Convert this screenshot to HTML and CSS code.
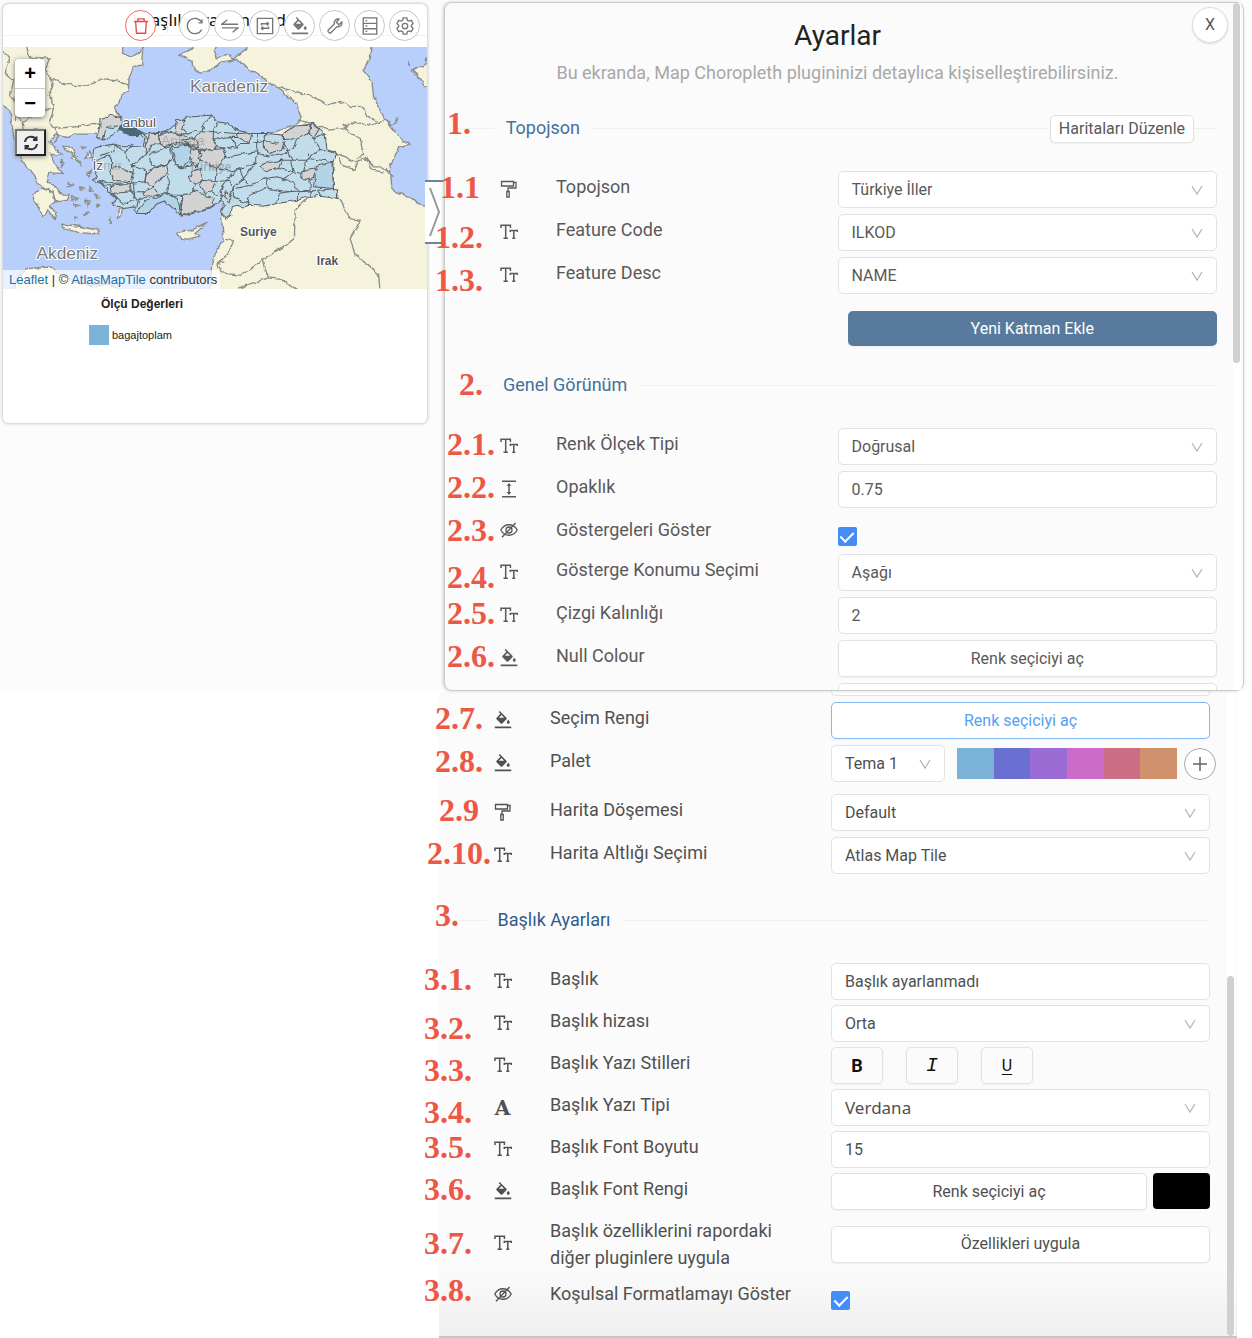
FILE: index.html
```html
<!DOCTYPE html>
<html lang="tr">
<head>
<meta charset="utf-8">
<meta name="viewport" content="width=device-width, initial-scale=1">
<title>Map Choropleth – Ayarlar</title>
<link rel="stylesheet" href="styles.css">
</head>
<body>
<svg class="sprite" aria-hidden="true">
  <defs>
    <symbol id="tt" viewBox="0 0 18 16"><path d="M1 4V1.200h9.400V4M5.700 1v13.300M3.500 14.300h4.400M10.300 8V6.400h7V8M13.800 6.400v8M12.300 14.300h3" fill="none" stroke="currentColor" stroke-width="1.500"/></symbol>
    <symbol id="roller" viewBox="0 0 18 18"><path d="M1.500 1.500h12v4.500h-12zM13.500 2.500h2.500v5.500H8v3.500M6.800 11.500h2.400v5.500H6.800z" fill="none" stroke="currentColor" stroke-width="1.300"/></symbol>
    <symbol id="height" viewBox="0 0 18 18"><path d="M2 1.300h14M2 16.700h14M9 4v10" fill="none" stroke="currentColor" stroke-width="1.500"/><path d="M9 3l2.300 3H6.700zM9 15l2.300-3H6.700z" fill="currentColor"/></symbol>
    <symbol id="eye" viewBox="0 0 18 16"><g fill="none" stroke="currentColor" stroke-width="1.300"><path d="M.8 8C4.500 1 13.500 1 17.200 8C13.500 15 4.500 15 .8 8z"/><circle cx="9" cy="8" r="3"/><path d="M15.600 1L2 15.300"/></g></symbol>
    <symbol id="bucket" viewBox="0 0 24 24"><path fill="currentColor" d="M16.560 8.940L7.620 0 6.210 1.410l2.380 2.380-5.150 5.150c-.59.59-.59 1.540 0 2.120l5.500 5.500c.29.29.68.44 1.060.44s.77-.15 1.060-.44l5.500-5.500c.59-.58.59-1.530 0-2.120zM6.500 9L10 5.210 13.500 9H6.500zM19 11.500s-2 2.170-2 3.500c0 1.100.9 2 2 2s2-.9 2-2c0-1.330-2-3.500-2-3.500zM1 20.500h22v2.500H1z"/></symbol>
    <symbol id="chev" viewBox="0 0 12 12"><path d="M1 1.500l5 8 5-8" fill="none" stroke="currentColor" stroke-width="1.200"/></symbol>
  </defs>
</svg>
<main class="page">
  <div class="preview">
    <section class="card">
      <header class="card-head">
        <h2 class="card-title">Başlık ayarlanmadı</h2>
        <div class="toolbar">
          <button class="tool danger" aria-label="Sil"><svg viewBox="0 0 20 20"><path d="M2 5h16M6.500 5V2h7v3M4 5l1 13h10l1-13" /></svg></button>
          <span class="tool-sep"></span>
          <button class="tool" aria-label="Yenile"><svg viewBox="0 0 20 20"><path d="M17.500 6A8.500 8.500 0 1 0 17.500 14M17.800 2.500V6.500H13.800"/></svg></button>
          <button class="tool" aria-label="Değiştir"><svg viewBox="0 0 20 20"><path d="M19 8H1l6-5M1 12h18l-6 5"/></svg></button>
          <button class="tool" aria-label="Döngü"><svg viewBox="0 0 20 20"><path d="M1.500 1.500h17v17h-17zM6 9.500V7.500h8M12 5.500l2 2-2 2M14 10.500v2H6M8 10.500l-2 2 2 2"/></svg></button>
          <button class="tool" aria-label="Boya"><svg><use href="#bucket"/></svg></button>
          <button class="tool" aria-label="Araçlar"><svg viewBox="0 0 20 20"><path d="M17.600 5.500l-3.400 3.100-2.700-2.700 3.100-3.500C11.500 1.500 8.500 4 9.300 7.800L2.300 14.800c-1 1 1.900 3.900 2.900 2.900l7-7c3.800.8 6.300-2.200 5.400-5.200z"/></svg></button>
          <button class="tool" aria-label="Veri"><svg viewBox="0 0 20 20"><path d="M2.500 1h15v18h-15zM2.500 7h15M2.500 13h15M5 4h2M5 10h2M5 16h2"/></svg></button>
          <button class="tool" aria-label="Ayarlar"><svg viewBox="0 0 20 20"><circle cx="10" cy="10" r="3"/><path d="M8 1h4l.6 2.600 1.800 1 2.600-.8 2 3.600-1.900 1.900v1.400l1.900 1.900-2 3.600-2.600-.8-1.800 1L12 19H8l-.6-2.600-1.800-1-2.600.8-2-3.600 1.900-1.900V9.300L1 7.400l2-3.600 2.600.8 1.800-1z"/></svg></button>
        </div>
      </header>
      <div class="map">
        <svg class="map-art" viewBox="9 141 1272 725" preserveAspectRatio="xMidYMid slice" role="img" aria-label="Türkiye haritası">
          <defs><filter id="rough" x="-5%" y="-5%" width="110%" height="110%"><feTurbulence type="fractalNoise" baseFrequency="0.05" numOctaves="2" seed="4"/><feDisplacementMap in="SourceGraphic" scale="14" xChannelSelector="R" yChannelSelector="G"/></filter></defs>
          <g class="land" filter="url(#rough)">
            <path d="M-20 100H370L368 160 395 172 420 158 432 141 428 195 400 200 388 235 385 270 362 285 358 310 345 322 362 350 330 365 290 402 225 402 205 412 165 405 150 425 187 465 150 462 165 490 190 520 150 518 142 545 165 555 180 580 208 585 203 600 170 605 150 590 130 560 112 545 100 520 70 490 60 455 45 430 40 395 30 330 0 310z"/>
            <path d="M98 585l30-22 32 12 6 30-16 12 18 22-4 18-18-25-16 18-10-25-16-20z"/>
            <path d="M538 165l42-24v-30h90l-28 40 10 22 35-8 15 15-40 6-20 18-40 15-20-10-3-25z"/>
            <path d="M745 120l-5 25-40 32 18 8 27 20 45 30 45 30 55 45 13 45-18 20-180 60-40 200 0 20 5 65-20 30-15 40-5 96h660V625l-30-15-30-20-30-10-25-15-5-65 15-35 10-25 35-8-35-22-45-60-30-60-5-45-27-35 22-35 10-65z"/>
            <path d="M1300 160l-22 15 3 15-46 22 25 22 10 25 30 5z"/>
            <path d="M1225 185l6 12-4-14z"/>
            <path d="M40 890l10-55 30-30 70-5 25 20 65 30 50 8 40-10 20 20 80 0 45 14 60-12 60 10 40 20z"/>
            <path d="M530 696l45-6 48-24-38 34 15 10-30 8-35-6zM188 672l50 6 60 12-5 12-50-5-55-12zM355 632l14-12-4 20-12 14zM328 660l4 14-2-18z"/>
            <path d="M190 435l30 12 10 20-35-18zM215 470l30 25-20-30zM245 440l15 2-12 4zM255 475l12-22 6 14zM185 480l8 10-6 10zM205 550l12 6-10 4zM240 560l12 8-10 2zM215 590l16 4-14 6zM255 600l14 2-12 6zM270 560l10 10-8 4zM262 520l10-10-4 18zM285 580l16 12-14 2zM225 612l12 4-10 4zM290 615l8 2-6 4zM265 620l8-14-10 4zM225 650l8 4-6 4zM252 640l12-2-8 8z"/>
            <path class="line" d="M9 150l20 30-12 40 25 20-10 45 20 30-8 45M80 141l8 28 20 5 40 0-10 35 22 45-15 30 20 30-15 50 25 45-12 20M145 235l55 18 50 5 60-22 60 10 18 12M45 345l30 20 45-35 35-5M70 365l5 40 40-20M165 385l60-5 55-10 30 5"/>
            <path class="line" d="M835 262l60 15 50 15 40 22 35-10 35 15 30 0 15 30 30 15M895 360l40 10 50 20 45-5 30-20 50 10 50-15 15 15 20-20M1030 370l20 30 30 15 10 50-20 10M1010 460l55 25 30-10 25 25 25 0 35 30M1010 460l15 35 40 15 10-25M1095 470l20 40 35 5"/>
            <path class="line" d="M1015 585l15 35 20 35 30 5-10 20-20 35 15 50 35 25 35 30 5 60M925 590l-40 40-2 85-95 65-65 45-60-8-10-30 30-25 18-40-25-5M785 775l20 58 45 5 60 45M805 833l-90 30M650 790l20-5"/>
          </g>
          <g class="place"><text class="sea-name" x="570" y="276">Karadeniz</text><text class="sea-name" x="110" y="776">Akdeniz</text></g>
          <g filter="url(#rough)" class="turkey">
            <path class="p" d="M362 372L322 380 315 395 312 420 345 400 370 385zM298 440l42-8 30 8 60-2 5-22-15-15 30 0 45-8 30-18 30-23 50-4 30-3 15 20 35 5 30 22 40 8 45 0 50 5 35-25 55-10 35 30 5 45 30 15-12 25 2 80 12 5 0 25-20-5-30-5-40 5-30 10-60 10-40 8-45-3-15 5-25-5-10 5-5 25-15 12-13-27 12-15-14-15-25 20-40 15-55 12-10-22-5-15-35-10-25 10-20 30-35 0-10-20-30 5-35-15 15-15-25-20-20-25-30-10 15-10-10-20 20-20-25-10 5-35z"/>
            <path class="p strong" d="M515 440l55-5 12 15-10 25 5 20-30 8-20-8-5-30zM412 640l20-38 40-12 30-12 30 14 12 54-50-44-25 10-20 28zM295 540l50 12 40-2-20 10-45-4zM945 500l50-15 5 80-60-5 5-25z"/>
            <path class="p dark" d="M360 372l35 8 38 16-18 14-30-7-25-12z"/>
            <g class="gray">
              <path d="M300 355l35-10 27 7 3 20-25 10-18-2-7 15-5 23-20-3 10-35z"/>
              <path d="M448 400l27 0 3 30-23 5-15 27-5-22 10-15zM480 405l25-10 40 10 45 15 0 15-60-5-35 10-17-10zM530 362l25-4-10 27 15 15-15 5-20-10zM605 392l35 3 0 25 10 20-15 10-45-5-45-25 40-5zM600 452l70-7 10 25-30 35-30-15-25-15zM575 450l20-10 10 30-15 30-20-25zM575 515l25-10 10 35-25 15-17-20zM610 540l35 5-10 30-20 5-15-20zM550 585l40-15 30 20 20 5 0 20-35 15-60 15-5-25zM465 500l35-5 5 20-45 45-25-15 5-25zM335 505l25-5 40 20-5 25-55-5-10-25zM330 560l60-10 5 25-60 5zM430 575l30-13 15 23-40 7zM712 400l43-2-5 32-35-18zM790 420l30 10 35-5-5 20-40 15-20-15zM850 400l35-22 45-3-5 25-35 15-40 3zM935 370l23 15-18 30-15-10zM790 490l55-10-10 25-40 7-15-12zM905 515l45-10-15 35-30-5zM675 575l20 15-5 15-15-15z"/>
            </g>
            <path class="b" d="M430 398l15 20-10 22M495 393l-15 12M495 393l30 2M555 352l0 6M635 345l-20 25-10 22M560 400l20-8 25 0M650 365l-10 30 70 5M640 420l40-10 35 2M650 440l30 5 45-15 25 0M690 408l20 35-25 5M680 470l90-15 0-55M770 455l0 30-50 20-15 15-25 10M800 400l-10 20M760 430l30-10M850 405l0 13M855 425l5 35-45 8-45-8M890 415l-10 30-25 10M940 415l20 30-40 35-40 0-20-30M975 400l-35 15M960 445l50 15M925 460l0 15 75 10M920 480l-10 30M880 480l-40 0M835 505l45 10 25 5M770 485l-40 50 20 20 50-20 30-5M870 480l10 35-35 25M720 505l10 30-30 25-10 30M750 555l-45 10M800 535l5 30 60 10 65-5 0-35M830 530l50 15 15 30 60-5 50-5M865 575l-30 5-5 28M895 575l0 25M935 570l-5 18M955 570l5 15M750 615l-10-25 60-30M700 560l0 35 50 15M650 505l-5 40M650 505l50 10 20-10M645 545l45-5 5 20M635 575l30 15 10 0M665 600l-5-30 35-50M570 475l-20 28-25-8-15-55-60 20 5 35 40 5M505 515l0 50-5 20 50 0M500 495l15-20M440 462l-45 35-20-40-30-25M395 497l45 15-5 33M345 432l0 20-45 15M375 457l25-25M290 480l35-12 10 10 0 27M400 520l-5-23M435 545l-45 5M395 575l20 25-5 25M430 575l-40 0M340 580l30 30 40-10M415 600l20-10M475 585l25-10M550 585l-10 60M585 555l-10 20M400 545l5 50"/>
          </g>
          <g class="place"><text class="town" x="368" y="382">anbul</text><text class="town faint" x="484" y="436">Ankara</text><text class="town" x="278" y="510">İz</text><text class="town faint" x="310" y="510">mir</text><text class="town bold faint" x="566" y="512">Türkiye</text><text class="town bold" x="720" y="706">Suriye</text><text class="town bold" x="950" y="795">Irak</text></g>
        </svg>
        <div class="zoom"><button aria-label="Yakınlaştır">+</button><button aria-label="Uzaklaştır">−</button></div>
        <button class="reset" aria-label="Haritayı sıfırla"><svg viewBox="0 0 16 16"><path d="M2 7a6 6 0 0 1 11-2.500M13.500 1.500v3.500h-3.500M14 9A6 6 0 0 1 3 11.500M2.500 14.500V11H6"/></svg></button>
        <p class="credit"><a href="#">Leaflet</a> | © <a href="#">AtlasMapTile</a> contributors</p>
      </div>
      <div class="legend">
        <h3>Ölçü Değerleri</h3>
        <p><span class="key"></span>bagajtoplam</p>
      </div>
    </section>
    <button class="handle" aria-label="Paneli aç"><svg viewBox="0 0 14 52"><path d="M2 2l9 24-9 24"/></svg></button>
  </div>

  <div class="settings">
    <section class="panel first">
      <span class="thumb"></span>
      <button class="close" aria-label="Kapat">X</button>
      <h1>Ayarlar</h1>
      <p class="lead">Bu ekranda, Map Choropleth plugininizi detaylıca kişiselleştirebilirsiniz.</p>

      <div class="divider"><b class="num n-a up">1.</b><h2>Topojson</h2><button class="btn small">Haritaları Düzenle</button></div>
      <div class="row"><b class="num n-c">1.1</b><svg class="ico"><use href="#roller"/></svg><label for="f11">Topojson</label><div class="ctl sel"><select id="f11"><option>Türkiye İller</option></select><svg><use href="#chev"/></svg></div></div>
      <div class="row"><b class="num n-d low">1.2.</b><svg class="ico"><use href="#tt"/></svg><label for="f12">Feature Code</label><div class="ctl sel"><select id="f12"><option>ILKOD</option></select><svg><use href="#chev"/></svg></div></div>
      <div class="row"><b class="num n-d low">1.3.</b><svg class="ico"><use href="#tt"/></svg><label for="f13">Feature Desc</label><div class="ctl sel"><select id="f13"><option>NAME</option></select><svg><use href="#chev"/></svg></div></div>
      <div class="add"><button class="btn primary">Yeni Katman Ekle</button></div>

      <div class="divider"><b class="num n-b">2.</b><h2>Genel Görünüm</h2></div>
      <div class="row"><b class="num n-a">2.1.</b><svg class="ico"><use href="#tt"/></svg><label for="f21">Renk Ölçek Tipi</label><div class="ctl sel"><select id="f21"><option>Doğrusal</option></select><svg><use href="#chev"/></svg></div></div>
      <div class="row"><b class="num n-a">2.2.</b><svg class="ico"><use href="#height"/></svg><label for="f22">Opaklık</label><div class="ctl"><input class="box" id="f22" value="0.75"></div></div>
      <div class="row tick"><b class="num n-a">2.3.</b><svg class="ico"><use href="#eye"/></svg><label for="f23">Göstergeleri Göster</label><div class="ctl"><input type="checkbox" id="f23" checked></div></div>
      <div class="row"><b class="num n-a low">2.4.</b><svg class="ico"><use href="#tt"/></svg><label for="f24">Gösterge Konumu Seçimi</label><div class="ctl sel"><select id="f24"><option>Aşağı</option></select><svg><use href="#chev"/></svg></div></div>
      <div class="row"><b class="num n-a">2.5.</b><svg class="ico"><use href="#tt"/></svg><label for="f25">Çizgi Kalınlığı</label><div class="ctl"><input class="box" id="f25" value="2"></div></div>
      <div class="row"><b class="num n-a">2.6.</b><svg class="ico"><use href="#bucket"/></svg><label for="f26">Null Colour</label><div class="ctl"><button class="btn" id="f26">Renk seçiciyi aç</button></div></div>
      <div class="peek"><div class="row"><svg class="ico"><use href="#bucket"/></svg><label for="f26b">Seçim Rengi</label><div class="ctl"><button class="btn" id="f26b" aria-label="Seçim rengi"></button></div></div></div>
    </section>

    <section class="panel second">
      <span class="thumb"></span>
      <div class="peek end"><div class="row"><span></span><span></span><div class="ctl"><button class="btn" aria-label="Null Colour"></button></div></div></div>
      <div class="row"><b class="num n-e">2.7.</b><svg class="ico"><use href="#bucket"/></svg><label for="f27">Seçim Rengi</label><div class="ctl"><button class="btn active" id="f27">Renk seçiciyi aç</button></div></div>
      <div class="row tall"><b class="num n-e">2.8.</b><svg class="ico"><use href="#bucket"/></svg><label for="f28">Palet</label><div class="ctl palette"><div class="sel theme"><select id="f28"><option>Tema 1</option></select><svg><use href="#chev"/></svg></div><div class="swatches"><i class="c1"></i><i class="c2"></i><i class="c3"></i><i class="c4"></i><i class="c5"></i><i class="c6"></i></div><button class="plus" aria-label="Palet ekle"><svg viewBox="0 0 16 16"><path d="M8 1v14M1 8h14"/></svg></button></div></div>
      <div class="row"><b class="num n-f">2.9</b><svg class="ico"><use href="#roller"/></svg><label for="f29">Harita Döşemesi</label><div class="ctl sel"><select id="f29"><option>Default</option></select><svg><use href="#chev"/></svg></div></div>
      <div class="row"><b class="num n-g">2.10.</b><svg class="ico"><use href="#tt"/></svg><label for="f210">Harita Altlığı Seçimi</label><div class="ctl sel"><select id="f210"><option>Atlas Map Tile</option></select><svg><use href="#chev"/></svg></div></div>

      <div class="divider third"><b class="num n-e up">3.</b><h2>Başlık Ayarları</h2></div>
      <div class="row"><b class="num n-h">3.1.</b><svg class="ico"><use href="#tt"/></svg><label for="f31">Başlık</label><div class="ctl"><input class="box" id="f31" value="Başlık ayarlanmadı"></div></div>
      <div class="row"><b class="num n-h low">3.2.</b><svg class="ico"><use href="#tt"/></svg><label for="f32">Başlık hizası</label><div class="ctl sel"><select id="f32"><option>Orta</option></select><svg><use href="#chev"/></svg></div></div>
      <div class="row"><b class="num n-h low">3.3.</b><svg class="ico"><use href="#tt"/></svg><label for="f33">Başlık Yazı Stilleri</label><div class="ctl styles"><button class="btn bold" id="f33">B</button><button class="btn italic">I</button><button class="btn under">U</button></div></div>
      <div class="row"><b class="num n-h low">3.4.</b><span class="ico letter" aria-hidden="true">A</span><label for="f34">Başlık Yazı Tipi</label><div class="ctl sel"><select id="f34" class="verdana"><option>Verdana</option></select><svg><use href="#chev"/></svg></div></div>
      <div class="row"><b class="num n-h">3.5.</b><svg class="ico"><use href="#tt"/></svg><label for="f35">Başlık Font Boyutu</label><div class="ctl"><input class="box" id="f35" value="15"></div></div>
      <div class="row"><b class="num n-h">3.6.</b><svg class="ico"><use href="#bucket"/></svg><label for="f36">Başlık Font Rengi</label><div class="ctl colour"><button class="btn" id="f36">Renk seçiciyi aç</button><i class="black"></i></div></div>
      <div class="row double"><b class="num n-h">3.7.</b><svg class="ico"><use href="#tt"/></svg><label for="f37">Başlık özelliklerini rapordaki diğer pluginlere uygula</label><div class="ctl"><button class="btn" id="f37">Özellikleri uygula</button></div></div>
      <div class="row tick"><b class="num n-h up">3.8.</b><svg class="ico"><use href="#eye"/></svg><label for="f38">Koşulsal Formatlamayı Göster</label><div class="ctl"><input type="checkbox" id="f38" checked></div></div>
    </section>
  </div>
</main>
</body>
</html>
```
FILE: styles.css
```css
* { box-sizing: border-box; }
body { margin: 0; background: #fff; color: #595959; font: 16px/24px Roboto, sans-serif; }
h1, h2, h3, p { margin: 0; font-weight: 400; }
button, input, select { font: inherit; color: inherit; margin: 0; }
button { padding: 0; cursor: pointer; }
.sprite { position: absolute; width: 0; height: 0; }

.page { display: grid; grid-template-columns: 436px minmax(0, 1fr); background: linear-gradient(#fcfcfc 690px, #fff 690px); }

/* Preview card */
.preview { position: relative; padding: 4px 9px 0 3px; }
.card { background: #fff; border-radius: 6px; box-shadow: 0 0 3px 1px #ccc; overflow: hidden; padding-bottom: 78px; }
.card-head { position: relative; height: 43px; text-align: center; }
.card-title { color: #111; font: 17px/31px "Noto Sans", sans-serif; border-bottom: 1px solid #f2f2f2; }
.toolbar { position: absolute; top: 6px; right: 7px; display: flex; gap: 4px; }
.tool { width: 31px; height: 31px; border: 1px solid #c4c4c4; border-radius: 50%; background: #fff; color: #777; display: grid; place-items: center; }
.tool svg { width: 18px; height: 18px; fill: none; stroke: currentColor; stroke-width: 1.5; }
.tool use { stroke: none; }
.tool.danger { color: #ec4a43; border-color: #ec6a63; }
.tool-sep { width: 1px; height: 15px; margin: 8px 7px 0; background: #e6e6e6; }

.map { position: relative; height: 242px; background: #b8cffb; overflow: hidden; }
.map-art { display: block; width: 100%; height: 100%; }
.land path { fill: #f6f3dc; stroke: #8c8c8c; stroke-width: 4; }
.land .line { fill: none; }
.turkey path { stroke: #555f65; stroke-width: 3; }
.turkey .p { fill: #c1dcea; }
.turkey .strong { fill: #b2d4e6; }
.turkey .dark { fill: #4b6878; }
.turkey .gray path { fill: #d3d3d3; }
.turkey .b { fill: none; }
.place { font-family: "Liberation Sans", Arial, sans-serif; fill: #555; stroke: #fff; stroke-width: 6; paint-order: stroke; stroke-linejoin: round; }
.sea-name { font-size: 52px; fill: #777; }
.town { font-size: 41px; }
.town.bold { font-weight: 700; font-size: 36px; }
.town.faint { opacity: .3; stroke: none; }

.zoom { position: absolute; left: 12px; top: 12px; width: 30px; display: grid; background: #fff; border-radius: 4px; box-shadow: 0 1px 5px #666; }
.zoom button { height: 29px; border: 0; background: none; color: #000; font: 700 20px/29px "Liberation Sans", sans-serif; }
.zoom button + button { border-top: 1px solid #ccc; }
.reset { position: absolute; left: 12px; top: 82px; width: 31px; height: 27px; border: 2px outset #777; background: #efefef; box-shadow: 0 1px 5px #888; display: grid; place-items: center; }
.reset svg { width: 16px; height: 16px; fill: none; stroke: #333; stroke-width: 2; }
.credit { position: absolute; left: 0; bottom: 0; padding: 0 3px 0 6px; background: rgba(255, 255, 255, .7); color: #333; font: 13px/19px "Liberation Sans", Arial, sans-serif; }
.credit a { color: #2470a4; text-decoration: none; }

.legend { padding: 6px 0 0 86px; color: #222; font: 11px/18px "Liberation Sans", Arial, sans-serif; }
.legend h3 { padding-left: 12px; font-size: 12px; font-weight: 700; line-height: 18px; }
.legend p { display: flex; align-items: center; gap: 3px; margin-top: 12px; }
.key { width: 20px; height: 20px; background: #7bb2d7; }

.handle { position: absolute; top: 180px; right: -8px; width: 19px; height: 64px; border: 2px solid #6f8498; border-width: 2px 0; background: #fff; display: grid; place-items: center; }
.handle svg { width: 14px; height: 52px; fill: none; stroke: #999; stroke-width: 2; }

/* Settings panels */
.settings { min-width: 0; }
.panel { position: relative; background: #fbfbfb; }
.first { z-index: 1; margin: 2px 8px 0; padding: 16px 26px 0 13px; border: 1px solid #ccc; border-radius: 8px; box-shadow: -1px 0 3px #ccc; }
.first::before, .second::before { content: ""; position: absolute; top: 0; bottom: 0; right: 2px; width: 8px; background: #fff; }
.second { margin: 0 15px 0 3px; padding: 0 27px 19px 13px; border-bottom: 2px solid #c4c4c4; background: linear-gradient(#fbfbfb calc(100% - 70px), #efefef); }
.thumb { position: absolute; right: 3px; width: 7px; height: 360px; border-radius: 4px; background: #d0d0d0; }
.first .thumb { top: 0; }
.second .thumb { bottom: 0; }
.close { position: absolute; right: 15px; top: 4px; width: 36px; height: 36px; border: 1px solid #ddd; border-radius: 50%; background: #fff; box-shadow: 0 1px 2px #ddd; }
h1 { font-size: 28px; line-height: 34px; color: #222; text-align: center; }
.lead { margin-top: 6px; font-size: 18px; line-height: 28px; color: #a8a8a8; text-align: center; }

.divider { position: relative; display: flex; align-items: center; gap: 12px; height: 24px; margin: 29px 0 31px; }
.divider::before, .divider::after { content: ""; height: 1px; background: #f0f0f0; flex: 54; }
.divider::after { flex: 946; }
.divider h2 { font-size: 18px; line-height: 24px; color: #44709d; }
.divider .small { position: absolute; right: 23px; top: -1px; width: auto; height: 28px; padding: 0 8px; }
.third { margin: 34px 0 31px; }
.second .divider h2 { color: #2f5c8c; }

.row { position: relative; display: grid; grid-template-columns: 98px minmax(0, 1fr) 50%; min-height: 37px; margin-bottom: 6px; align-items: center; }
.third ~ .row { margin-bottom: 5px; }
.row label { align-self: start; padding: 2px 32px 0 0; font-size: 18px; line-height: 27px; }
.ico { justify-self: center; width: 18px; height: 18px; margin: 0 0 2px 3px; }
.letter { font: 700 20px/20px "DejaVu Serif", serif; text-align: center; }
.ctl { min-width: 0; }
.second { color: #505050; }

.box, .btn, select { display: block; width: 100%; height: 37px; border: 1px solid #e2e2e2; border-radius: 5px; background: #fff; }
.box, select { padding: 0 13px; outline: 0; appearance: none; }
.btn { box-shadow: 0 1px 2px #eee; text-align: center; }
.btn.active { border-color: #83b9f7; color: #539ff5; }
.btn.primary { height: 35px; border: 0; background: #587b9d; color: #fff; }
.add { display: flex; justify-content: flex-end; margin-top: 17px; padding-left: calc(50% + 10px); }
.add + .divider { margin: 27px 0 31px; }
.sel { position: relative; }
.sel svg { position: absolute; right: 14px; top: 13px; width: 12px; height: 13px; color: #b4b4b4; pointer-events: none; }
.verdana { font-family: "Noto Sans", sans-serif; font-size: 17px; }

.tick { min-height: 34px; }
.tick label { padding-right: 0; }
.tick .ctl { align-self: start; padding-top: 13px; }
.tick input { appearance: none; width: 19px; height: 19px; border-radius: 2px; background: #448df6; display: grid; place-items: center; }
.tick input::after { content: ""; width: 6px; height: 11px; margin-top: -3px; border: solid #fff; border-width: 0 2px 2px 0; transform: rotate(45deg); }

.tall { margin-bottom: 12px; }
.palette { display: flex; align-items: center; gap: 7px; margin-right: -6px; }
.theme { width: 114px; }
.swatches { flex: 1; display: flex; height: 31px; margin-left: 5px; }
.swatches i { flex: 1; }
.c1 { background: #7bb2d7; }
.c2 { background: #6970d1; }
.c3 { background: #9b6cd3; }
.c4 { background: #cd6cc8; }
.c5 { background: #cb6d85; }
.c6 { background: #d0916d; }
.plus { width: 32px; height: 32px; border: 1px solid #aaa; border-radius: 50%; background: #fff; display: grid; place-items: center; }
.plus svg { width: 16px; height: 16px; fill: none; stroke: #666; stroke-width: 1.5; }

.styles { display: flex; gap: 23px; }
.styles .btn { width: 52px; background: none; color: #111; font-size: 18px; }
.styles .bold { font-weight: 700; }
.styles .italic { font: italic 400 20px/24px "Liberation Mono", monospace; }
.styles .under { font-size: 16px; text-decoration: underline; text-underline-offset: 3px; }
.colour { display: flex; gap: 6px; }
.colour .btn { flex: 1; }
.black { width: 57px; height: 36px; border-radius: 4px; background: #000; }
.double { min-height: 58px; }

.peek { height: 7px; overflow: hidden; }
.peek.end { display: flex; flex-direction: column; justify-content: flex-end; height: 5px; margin-bottom: 6px; }
.peek.end .row { flex: none; margin: 0; }

/* Step numbers laid over the screens */
.num { position: absolute; top: -2px; z-index: 2; color: #ec5746; font: 700 32px/36px "Liberation Serif", serif; white-space: nowrap; }
.num.low { top: 5px; }
.divider .num { top: -7px; }
.divider .num.up { top: -11px; }
.row .num.up { top: -6px; }
.double .num { top: 10px; }
.n-a { left: -11px; }
.n-b { left: 1px; }
.n-c { left: -18px; }
.n-d { left: -23px; }
.n-e { left: -17px; }
.n-f { left: -13px; }
.n-g { left: -25px; }
.n-h { left: -28px; }
```
